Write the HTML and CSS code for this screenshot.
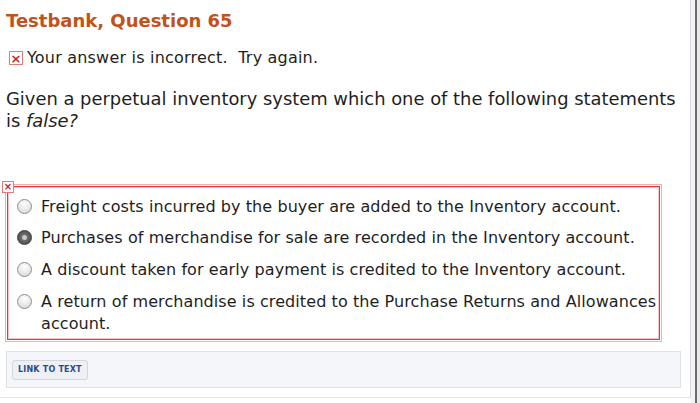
FILE: index.html
```html
<!DOCTYPE html>
<html>
<head>
<meta charset="utf-8">
<link rel="stylesheet" href="styles.css">
</head>
<body>
<div class="frame">
  <div class="page">
    <h1 class="title">Testbank, Question 65</h1>
    <div class="feedback">
      <span class="xicon">×</span>
      <span>Your answer is incorrect.&nbsp; Try again.</span>
    </div>
    <p class="question"><span>Given a perpetual inventory system which one of the following statements</span> <span>is <em>false?</em></span></p>
    <div class="answers">
      <span class="xicon small">×</span>
      <div class="option"><span class="radio"></span><span class="label">Freight costs incurred by the buyer are added to the Inventory account.</span></div>
      <div class="option"><span class="radio checked"></span><span class="label">Purchases of merchandise for sale are recorded in the Inventory account.</span></div>
      <div class="option"><span class="radio"></span><span class="label">A discount taken for early payment is credited to the Inventory account.</span></div>
      <div class="option"><span class="radio"></span><span class="label">A return of merchandise is credited to the Purchase Returns and Allowances account.</span></div>
    </div>
    <div class="links">
      <span class="linkbtn">LINK TO TEXT</span>
    </div>
  </div>
  <div class="rail"></div>
</div>
</body>
</html>
```
FILE: styles.css
```css
html, body {
  margin: 0;
  padding: 0;
  background: #ffffff;
}
body {
  font-family: "DejaVu Sans", Verdana, sans-serif;
  color: #1e1e1e;
}
.frame {
  display: flex;
  width: 700px;
  height: 403px;
  overflow: hidden;
}
.page {
  width: 684px;
  height: 397px;
  padding: 0 0 0 6px;
  border-right: 1px solid #d6d8dc;
  border-bottom: 1px solid #e3e5e8;
  flex: none;
}
.rail {
  flex: 1;
  background: linear-gradient(to right, #f2f3f6 0 4px, #6a6a6a 4px 6px, #e9e9e9 6px);
}
.title {
  margin: 0;
  padding-top: 9px;
  font-size: 18px;
  line-height: 24px;
  font-weight: bold;
  color: #c2521c;
}
.feedback {
  display: flex;
  align-items: center;
  gap: 4px;
  margin-top: 14px;
  padding-left: 3px;
  font-size: 16px;
  letter-spacing: 0.2px;
  line-height: 22px;
}
.xicon {
  display: inline-flex;
  align-items: center;
  justify-content: center;
  width: 12px;
  height: 12px;
  border: 1px solid #e07c7c;
  background: #fff;
  color: #c81e1e;
  font-size: 13px;
  font-weight: bold;
  line-height: 1;
  letter-spacing: 0;
}
.question {
  margin: 19px 0 0 0;
  font-size: 17.9px;
  line-height: 22px;
  width: 680px;
}
.question em {
  font-style: italic;
}
.answers {
  position: relative;
  margin-top: 54px;
  margin-left: 1px;
  width: 651px;
  border: 1px solid #e23a3a;
  outline: 1px solid #f4b0b0;
  outline-offset: 1px;
  box-shadow: inset 0 0 0 1px #f6c4c4;
  padding: 4px 0 0 0;
}
.xicon.small {
  position: absolute;
  left: -6px;
  top: -6px;
  width: 10px;
  height: 10px;
  font-size: 10px;
}
.option {
  display: flex;
  align-items: flex-start;
  gap: 9px;
  padding: 4.8px 0 4.8px 9px;
  font-size: 16px;
  letter-spacing: 0.08px;
  line-height: 22px;
}
.radio {
  flex: none;
  width: 13px;
  height: 13px;
  margin-top: 3px;
  border-radius: 50%;
  border: 1px solid #8e8e8e;
  background: radial-gradient(circle at 50% 30%, #ffffff 0, #e6e6e6 60%, #cfcfcf 100%);
}
.radio.checked {
  border-color: #3c3c3c;
  background: radial-gradient(circle at 50% 50%, #c8c8c8 0 2px, #6c6c6c 3px, #3e3e3e 100%);
}
.label {
  flex: 1;
}
.links {
  margin-top: 11px;
  width: 668px;
  height: 35px;
  border: 1px solid #e0e2e7;
  background: #f5f6f9;
  display: flex;
  align-items: center;
  padding-left: 5px;
}
.linkbtn {
  display: inline-block;
  padding: 4px 5px;
  border: 1px solid #d2d6de;
  border-radius: 3px;
  background: #eef0f4;
  color: #2c4a86;
  font-size: 8px;
  font-weight: bold;
  letter-spacing: 0.2px;
  line-height: 10px;
}
```
